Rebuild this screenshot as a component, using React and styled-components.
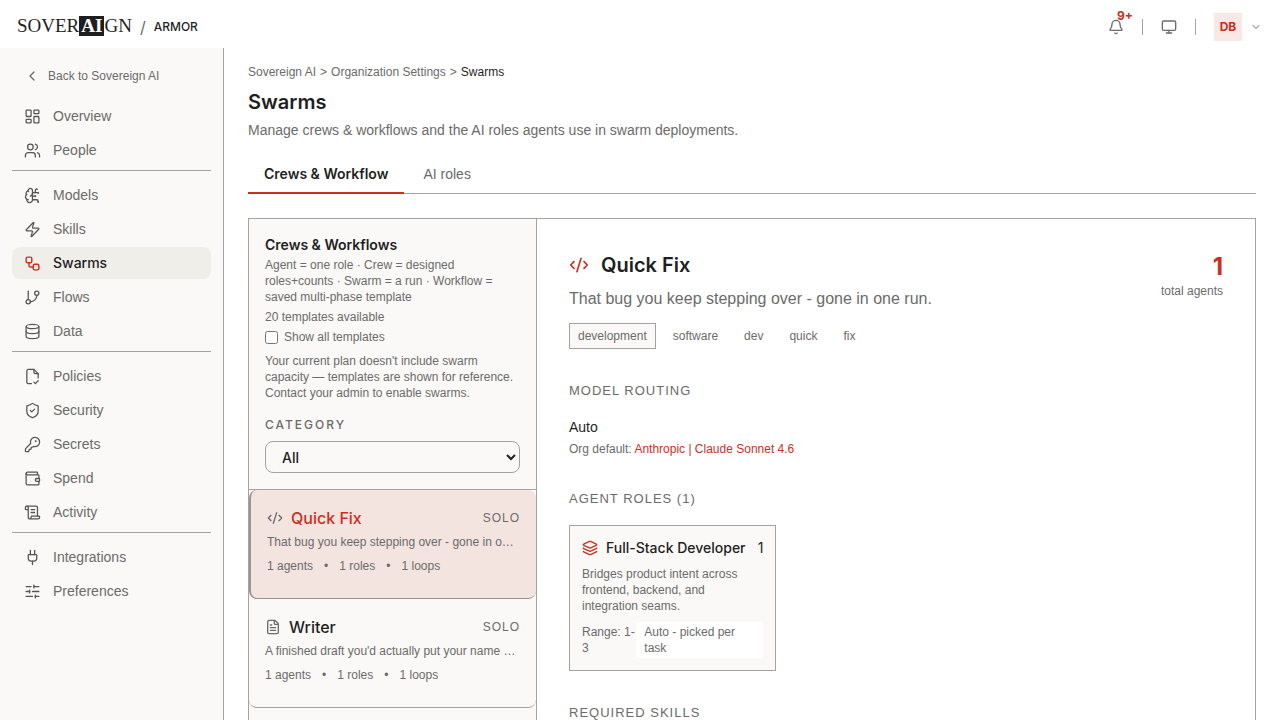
import React from 'react';
import styled, { createGlobalStyle, css } from 'styled-components';
import {
  LayoutDashboard, Users, BrainCircuit, Zap, Workflow, GitBranch, Database, ShieldCheck,
  KeyRound, Wallet, ScrollText, Plug, SlidersHorizontal, ChevronLeft, ChevronDown,
  Bell, Monitor, CodeXml, FileText, Layers,
} from 'lucide-react';

const ink = '#1f1f1f';
const muted = '#6b6b6b';
const line = '#a3a3a3';
const red = '#cb2f1d';
const panel = '#faf9f7';
const display = 'Inter, "Liberation Sans", sans-serif';

const Global = createGlobalStyle`
  *, *::before, *::after { box-sizing: border-box; }
  body { margin: 0; background: #fff; color: ${ink}; font: 400 14px/20px "Liberation Sans", Arial, sans-serif; }
  h1, h2, h3, h4, p, ul { margin: 0; padding: 0; }
  h1, h2, h3, h4 { font-family: ${display}; }
  ul { list-style: none; }
  a { color: inherit; text-decoration: none; }
  button, select { font: inherit; color: inherit; }
  svg { flex: none; display: block; }
`;

const Page = styled.div`
  display: grid;
  grid-template-rows: 48px 1fr;
  height: 100vh;
  overflow: hidden;
`;
const TopBar = styled.header`
  display: flex;
  align-items: center;
  justify-content: space-between;
  padding: 5px 18px 0 17px;
`;
const Brand = styled.div`
  display: flex;
  align-items: center;
  font-family: ${display};
  font-size: 12px;
  font-weight: 500;
`;
const Wordmark = styled.a`
  display: flex;
  margin-bottom: 2px;
  font: 400 19px/20px "Liberation Serif", serif;
`;
const WordmarkBlock = styled.span`
  padding: 0 2px;
  background: ${ink};
  color: #fff;
  font-weight: 700;
`;
const Slash = styled.span`
  margin: 0 8px;
  font-size: 16px;
  font-weight: 400;
  color: ${muted};
`;
const Tools = styled.div`
  display: flex;
  align-items: center;
  color: ${muted};
`;
const IconButton = styled.button`
  position: relative;
  display: flex;
  padding: 0;
  border: 0;
  background: none;
`;
const Count = styled.span`
  position: absolute;
  left: 9px;
  top: -11px;
  font-family: ${display};
  font-size: 12px;
  line-height: 16px;
  font-weight: 700;
  color: ${red};
`;
const Rule = styled.span`
  width: 1px;
  height: 16px;
  margin: 0 18px;
  background: ${line};
`;
const Account = styled.button`
  display: flex;
  align-items: center;
  gap: 8px;
  padding: 0;
  border: 0;
  background: none;
`;
const Avatar = styled.span`
  width: 28px;
  font-family: ${display};
  font-size: 12px;
  line-height: 28px;
  font-weight: 700;
  color: ${red};
  background: #f9e8e5;
`;
const Body = styled.div`
  display: grid;
  grid-template-columns: 224px minmax(0, 1fr);
  min-height: 0;
`;
const Sidebar = styled.nav`
  padding: 12px;
  background: ${panel};
  border-right: 1px solid ${line};
`;
const Back = styled.a`
  display: flex;
  align-items: center;
  gap: 8px;
  height: 32px;
  margin-bottom: 8px;
  padding-left: 12px;
  font-size: 12px;
  color: ${muted};
`;
const NavGroup = styled.ul`
  display: flex;
  flex-direction: column;
  gap: 2px;
  & + & {
    margin-top: 4px;
    padding-top: 8px;
    border-top: 1px solid ${line};
  }
`;
const NavLink = styled.a`
  display: flex;
  align-items: center;
  gap: 12px;
  height: 32px;
  padding-left: 12px;
  border-radius: 8px;
  color: ${muted};
  svg { color: #555; }
  ${(p) => p.$active && css`
    background: #f0eee9;
    color: ${ink};
    font-family: ${display};
    font-weight: 500;
    svg { color: ${red}; }
  `}
`;
const Main = styled.main`
  padding: 16px 24px 0;
  overflow: hidden;
`;
const Crumbs = styled.nav`
  display: flex;
  gap: 4px;
  font-size: 12px;
  line-height: 16px;
  color: ${muted};
  [aria-current] { color: ${ink}; }
`;
const Title = styled.h1`
  margin-top: 8px;
  font-size: 20px;
  line-height: 28px;
  font-weight: 600;
`;
const Lead = styled.p`
  margin-top: 4px;
  color: ${muted};
`;
const Tabs = styled.div`
  display: flex;
  gap: 3px;
  margin: 14px 0 24px;
  border-bottom: 1px solid ${line};
`;
const Tab = styled.button`
  height: 40px;
  margin-bottom: -1px;
  padding: 2px 16px 0;
  border: 0;
  border-bottom: 2px solid ${(p) => (p.$active ? red : 'transparent')};
  background: none;
  font-family: ${(p) => (p.$active ? display : 'inherit')};
  font-weight: ${(p) => (p.$active ? 600 : 400)};
  color: ${(p) => (p.$active ? ink : muted)};
`;
const Workspace = styled.div`
  display: grid;
  grid-template-columns: 288px minmax(0, 1fr);
  border: 1px solid ${line};
`;
const Catalog = styled.section`
  background: ${panel};
  border-right: 1px solid ${line};
`;
const Filters = styled.div`
  display: flex;
  flex-direction: column;
  gap: 4px;
  padding: 16px;
  border-bottom: 1px solid ${line};
  font-size: 12px;
  line-height: 16px;
  color: ${muted};
`;
const PanelTitle = styled.h2`
  margin-bottom: -2px;
  font-size: 14px;
  line-height: 20px;
  font-weight: 600;
  color: ${ink};
`;
const Check = styled.label`
  display: flex;
  align-items: center;
  gap: 6px;
  input { width: 13px; height: 13px; margin: 0; }
`;
const Notice = styled.p`
  margin-top: 4px;
`;
const Caps = styled.label`
  margin-top: 12px;
  font-family: ${display};
  font-weight: 500;
  letter-spacing: 2px;
  text-transform: uppercase;
`;
const Select = styled.select`
  height: 32px;
  margin-top: 4px;
  padding: 0 0 0 12px;
  border: 1px solid ${line};
  border-radius: 8px;
  background: ${panel};
  font-family: ${display};
  font-size: 14px;
  font-weight: 500;
  color: ${ink};
`;
const Card = styled.article`
  height: 109px;
  padding: 16px;
  border-bottom: 1px solid ${line};
  border-radius: 8px;
  font-size: 12px;
  line-height: 16px;
  color: ${muted};
  ${(p) => p.$active && css`
    background: #f3e4e0;
    border-left: 2px solid #a0938f;
    border-bottom-color: #a0938f;
  `}
`;
const CardHead = styled.div`
  display: flex;
  align-items: center;
  gap: 8px;
  margin-bottom: 4px;
`;
const CardName = styled.h3`
  flex: 1;
  font-size: 16px;
  line-height: 24px;
  font-weight: 500;
  color: ${(p) => (p.$active ? red : ink)};
`;
const Mode = styled.span`
  letter-spacing: 1px;
`;
const Clip = styled.p`
  overflow: hidden;
  white-space: nowrap;
  text-overflow: ellipsis;
`;
const Facts = styled.p`
  display: flex;
  gap: 11px;
  margin-top: 8px;
`;
const Detail = styled.section`
  padding: 32px;
`;
const DetailHead = styled.div`
  display: flex;
  justify-content: space-between;
`;
const DetailTitle = styled.h2`
  display: flex;
  align-items: center;
  gap: 12px;
  font-size: 20px;
  line-height: 28px;
  font-weight: 600;
  svg { color: ${red}; }
`;
const Summary = styled.p`
  margin-top: 8px;
  font-size: 16px;
  line-height: 24px;
  color: ${muted};
`;
const Total = styled.p`
  display: flex;
  flex-direction: column;
  text-align: right;
  font-size: 12px;
  line-height: 16px;
  color: ${muted};
  strong {
    font-family: ${display};
    font-size: 24px;
    line-height: 32px;
    font-weight: 700;
    color: ${red};
  }
`;
const Tags = styled.ul`
  display: flex;
  gap: 8px;
  margin-top: 12px;
`;
const Tag = styled.li`
  padding: 4px 8px;
  border: 1px solid ${(p) => (p.$boxed ? line : 'transparent')};
  background: ${(p) => (p.$boxed ? panel : 'none')};
  font-size: 12px;
  line-height: 16px;
  color: ${muted};
`;
const Section = styled.section`
  margin-top: 32px;
`;
const SectionTitle = styled.h3`
  margin-bottom: 16px;
  font-family: "Liberation Sans", Arial, sans-serif;
  font-size: 13px;
  line-height: 20px;
  font-weight: 400;
  letter-spacing: 1px;
  text-transform: uppercase;
  color: ${muted};
`;
const Default = styled.p`
  margin-top: 4px;
  font-size: 12px;
  line-height: 16px;
  color: ${muted};
  a { color: ${red}; }
`;
const Roles = styled.div`
  display: grid;
  grid-template-columns: repeat(3, minmax(0, 1fr));
  gap: 16px;
`;
const Role = styled.article`
  padding: 12px;
  border: 1px solid ${line};
  background: ${panel};
  font-size: 12px;
  line-height: 16px;
  color: ${muted};
`;
const RoleHead = styled.div`
  display: flex;
  align-items: center;
  gap: 8px;
  margin-bottom: 8px;
  font-family: ${display};
  font-size: 14px;
  line-height: 20px;
  color: ${ink};
  svg { color: ${red}; }
  h4 { flex: 1; font-weight: 500; white-space: nowrap; }
`;
const RoleFoot = styled.div`
  display: flex;
  align-items: center;
  margin-top: 8px;
`;
const Range = styled.span`
  flex: 1;
`;
const Picked = styled.span`
  flex: none;
  width: 127px;
  padding: 2px 8px;
  background: #fff;
`;

const PolicyIcon = ({ size = 16, strokeWidth = 2 }) => (
  <svg width={size} height={size} viewBox="0 0 24 24" fill="none" stroke="currentColor" strokeWidth={strokeWidth} strokeLinecap="round" strokeLinejoin="round" aria-hidden="true">
    <path d="M10.500 22H6a2 2 0 0 1-2-2V4a2 2 0 0 1 2-2h8l6 6v6" />
    <path d="M14 2v4a2 2 0 0 0 2 2h4" />
    <path d="m14 20 2 2 4-4" />
  </svg>
);

const nav = [
  [['Overview', LayoutDashboard], ['People', Users]],
  [['Models', BrainCircuit], ['Skills', Zap], ['Swarms', Workflow], ['Flows', GitBranch], ['Data', Database]],
  [['Policies', PolicyIcon], ['Security', ShieldCheck], ['Secrets', KeyRound], ['Spend', Wallet], ['Activity', ScrollText]],
  [['Integrations', Plug], ['Preferences', SlidersHorizontal]],
];

const crews = [
  { name: 'Quick Fix', icon: CodeXml, text: 'That bug you keep stepping over - gone in one run.', active: true },
  { name: 'Writer', icon: FileText, text: "A finished draft you'd actually put your name on." },
];

export default function App() {
  return (
    <Page>
      <Global />
      <TopBar>
        <Brand>
          <Wordmark href="#home">SOVER<WordmarkBlock>AI</WordmarkBlock>GN</Wordmark>
          <Slash>/</Slash>
          ARMOR
        </Brand>
        <Tools>
          <IconButton aria-label="Notifications"><Bell size={16} strokeWidth={2} /><Count>9+</Count></IconButton>
          <Rule />
          <IconButton aria-label="Display"><Monitor size={16} strokeWidth={2} /></IconButton>
          <Rule />
          <Account><Avatar>DB</Avatar><ChevronDown size={12} strokeWidth={2} /></Account>
        </Tools>
      </TopBar>
      <Body>
        <Sidebar>
          <Back href="#back"><ChevronLeft size={16} strokeWidth={2} />Back to Sovereign AI</Back>
          {nav.map((group, i) => (
            <NavGroup key={i}>
              {group.map(([label, Icon]) => (
                <li key={label}>
                  <NavLink href={`#${label}`} $active={label === 'Swarms'}>
                    <Icon size={17} strokeWidth={label === 'Swarms' ? 2 : 1.8} />{label}
                  </NavLink>
                </li>
              ))}
            </NavGroup>
          ))}
        </Sidebar>
        <Main>
          <Crumbs aria-label="Breadcrumb">
            <a href="#home">Sovereign AI</a><span>&gt;</span>
            <a href="#settings">Organization Settings</a><span>&gt;</span>
            <span aria-current="page">Swarms</span>
          </Crumbs>
          <Title>Swarms</Title>
          <Lead>Manage crews &amp; workflows and the AI roles agents use in swarm deployments.</Lead>
          <Tabs role="tablist">
            <Tab role="tab" aria-selected="true" $active>Crews &amp; Workflow</Tab>
            <Tab role="tab" aria-selected="false">AI roles</Tab>
          </Tabs>
          <Workspace>
            <Catalog>
              <Filters>
                <PanelTitle>Crews &amp; Workflows</PanelTitle>
                <p>Agent = one role · Crew = designed roles+counts · Swarm = a run · Workflow = saved multi-phase template</p>
                <p>20 templates available</p>
                <Check><input type="checkbox" />Show all templates</Check>
                <Notice>Your current plan doesn't include swarm capacity — templates are shown for reference. Contact your admin to enable swarms.</Notice>
                <Caps htmlFor="category">Category</Caps>
                <Select id="category"><option>All</option></Select>
              </Filters>
              {crews.map(({ name, icon: Icon, text, active }) => (
                <Card key={name} $active={active}>
                  <CardHead>
                    <Icon size={16} strokeWidth={2} />
                    <CardName $active={active}>{name}</CardName>
                    <Mode>SOLO</Mode>
                  </CardHead>
                  <Clip>{text}</Clip>
                  <Facts><span>1 agents</span><span>•</span><span>1 roles</span><span>•</span><span>1 loops</span></Facts>
                </Card>
              ))}
            </Catalog>
            <Detail>
              <DetailHead>
                <div>
                  <DetailTitle><CodeXml size={20} strokeWidth={2} />Quick Fix</DetailTitle>
                  <Summary>That bug you keep stepping over - gone in one run.</Summary>
                </div>
                <Total><strong>1</strong>total agents</Total>
              </DetailHead>
              <Tags>
                {['development', 'software', 'dev', 'quick', 'fix'].map((t, i) => <Tag key={t} $boxed={i === 0}>{t}</Tag>)}
              </Tags>
              <Section>
                <SectionTitle>Model routing</SectionTitle>
                <p>Auto</p>
                <Default>Org default: <a href="#model">Anthropic | Claude Sonnet 4.6</a></Default>
              </Section>
              <Section>
                <SectionTitle>Agent roles (1)</SectionTitle>
                <Roles>
                  <Role>
                    <RoleHead><Layers size={16} strokeWidth={2} /><h4>Full-Stack Developer</h4><span>1</span></RoleHead>
                    <p>Bridges product intent across frontend, backend, and integration seams.</p>
                    <RoleFoot><Range>Range: 1-3</Range><Picked>Auto - picked per task</Picked></RoleFoot>
                  </Role>
                </Roles>
              </Section>
              <Section>
                <SectionTitle>Required skills</SectionTitle>
              </Section>
            </Detail>
          </Workspace>
        </Main>
      </Body>
    </Page>
  );
}
